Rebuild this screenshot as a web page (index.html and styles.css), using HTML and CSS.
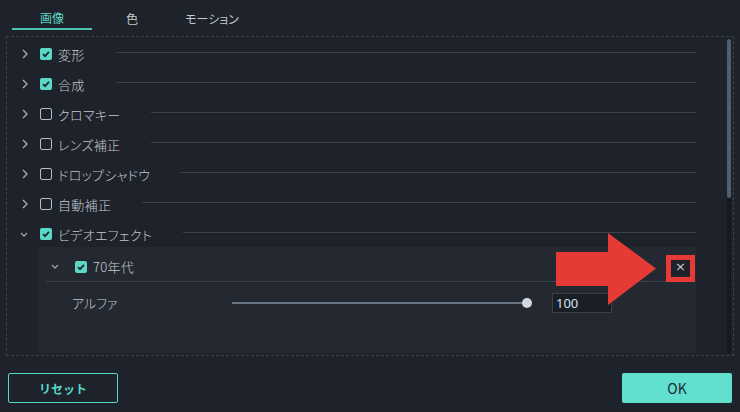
FILE: index.html
```html
<!DOCTYPE html>
<html lang="ja">

<head>
    <meta charset="UTF-8" />
    <meta name="viewport" content="width=device-width, initial-scale=1.0" />
    <title>エフェクト設定</title>
    <link rel="stylesheet" href="styles.css">
</head>

<body>
    <div class="tabs">
        <div class="tab active">画像</div>
        <div class="tab">色</div>
        <div class="tab">モーション</div>
    </div>

    <div class="content">
        <div class="list">
            <div class="row">
                <svg class="chev" width="6" height="10" viewBox="0 0 6 10"><path d="M1 1l4 4-4 4" /></svg>
                <span class="check on"><svg width="12" height="12" viewBox="0 0 12 12"><path d="M3 6.2l2 2 4-4.4" /></svg></span>
                <span class="name">変形</span>
                <span class="rule"></span>
            </div>
            <div class="row">
                <svg class="chev" width="6" height="10" viewBox="0 0 6 10"><path d="M1 1l4 4-4 4" /></svg>
                <span class="check on"><svg width="12" height="12" viewBox="0 0 12 12"><path d="M3 6.2l2 2 4-4.4" /></svg></span>
                <span class="name">合成</span>
                <span class="rule"></span>
            </div>
            <div class="row">
                <svg class="chev" width="6" height="10" viewBox="0 0 6 10"><path d="M1 1l4 4-4 4" /></svg>
                <span class="check"></span>
                <span class="name">クロマキー</span>
                <span class="rule"></span>
            </div>
            <div class="row">
                <svg class="chev" width="6" height="10" viewBox="0 0 6 10"><path d="M1 1l4 4-4 4" /></svg>
                <span class="check"></span>
                <span class="name">レンズ補正</span>
                <span class="rule"></span>
            </div>
            <div class="row">
                <svg class="chev" width="6" height="10" viewBox="0 0 6 10"><path d="M1 1l4 4-4 4" /></svg>
                <span class="check"></span>
                <span class="name">ドロップシャドウ</span>
                <span class="rule"></span>
            </div>
            <div class="row">
                <svg class="chev" width="6" height="10" viewBox="0 0 6 10"><path d="M1 1l4 4-4 4" /></svg>
                <span class="check"></span>
                <span class="name">自動補正</span>
                <span class="rule"></span>
            </div>
            <div class="row">
                <svg class="chev down" width="8" height="5" viewBox="0 0 8 5"><path d="M1 1l3 3 3-3" /></svg>
                <span class="check on"><svg width="12" height="12" viewBox="0 0 12 12"><path d="M3 6.2l2 2 4-4.4" /></svg></span>
                <span class="name">ビデオエフェクト</span>
                <span class="rule"></span>
            </div>

            <div class="panel">
                <div class="effect">
                    <svg class="chev down" width="8" height="5" viewBox="0 0 8 5"><path d="M1 1l3 3 3-3" /></svg>
                    <span class="check on"><svg width="12" height="12" viewBox="0 0 12 12"><path d="M3 6.2l2 2 4-4.4" /></svg></span>
                    <span class="name">70年代</span>
                    <button class="close" type="button">×</button>
                </div>
                <div class="param">
                    <span class="label">アルファ</span>
                    <div class="slider"><span class="track"></span><span class="thumb"></span></div>
                    <input class="value" type="text" value="100" />
                </div>
            </div>
        </div>
        <div class="scroll"><span class="thumb-bar"></span></div>
    </div>

    <div class="footer">
        <button class="btn reset" type="button">リセット</button>
        <button class="btn ok" type="button">OK</button>
    </div>

    <!-- annotation drawn over the dialog -->
    <svg class="note" width="740" height="412" viewBox="0 0 740 412">
        <polygon points="556,252 608,252 608,233 656,268.5 608,305 608,286 556,286" fill="#e53a35" />
        <rect x="668.5" y="257.5" width="24" height="22" fill="none" stroke="#e53a35" stroke-width="5" />
    </svg>
</body>

</html>
```

FILE: styles.css
```css
body {
    margin: 0;
    width: 740px;
    height: 412px;
    background: #1e222a;
    color: #c3c8ce;
    font-family: "Noto Sans CJK JP", "Noto Sans", sans-serif;
    font-feature-settings: "palt";
    position: relative;
    overflow: hidden;
}

.tabs {
    display: flex;
    height: 36px;
    padding-left: 12px;
}

.tab {
    width: 80px;
    height: 30px;
    box-sizing: border-box;
    display: flex;
    align-items: center;
    justify-content: center;
    padding-top: 7px;
    font-size: 12px;
}

.tab.active {
    color: #5dd6c6;
    border-bottom: 2px solid #4fc3b3;
}

.content {
    display: flex;
    height: 320px;
    margin: 0 6px;
    box-sizing: border-box;
    border: 1px dashed #3a434d;
}

.list {
    flex: 1;
    padding: 2px 0 0 15px;
    overflow: hidden;
}

.row {
    display: flex;
    align-items: center;
    height: 30px;
    padding-right: 31px;
    font-size: 13px;
    font-weight: 300;
}

.chev {
    flex: none;
    margin-right: 12px;
    fill: none;
    stroke: #a9afb7;
    stroke-width: 1.3;
}

.chev.down {
    margin-left: -2px;
    stroke: #9aa0a8;
}

.check {
    width: 12px;
    height: 12px;
    box-sizing: border-box;
    flex: none;
    border: 1.5px solid #b9bec5;
    border-radius: 2px;
    margin-right: 6px;
}

.check.on {
    background: #5bd8c8;
    border: none;
}

.check svg {
    display: block;
    fill: none;
    stroke: #1d2a30;
    stroke-width: 1.8;
}

.name {
    white-space: nowrap;
    letter-spacing: 0.3px;
}

.rule {
    flex: 1;
    height: 1px;
    margin: 0 0 3px 31px;
    background: #3b4149;
}

.panel {
    width: 658px;
    height: 106px;
    margin: -2px 0 0 16px;
    background: #242931;
}

.effect {
    display: flex;
    align-items: center;
    height: 35px;
    margin: 0 8px;
    padding: 5px 0 0 5px;
    box-sizing: border-box;
    border-bottom: 1px solid #3b4149;
    font-size: 13px;
    font-weight: 300;
}

.effect .chev {
    margin: 0 16px 0 0;
}

.effect .name {
    flex: 1;
}

.close {
    width: 19px;
    height: 18px;
    margin-right: -2px;
    padding: 0;
    border: none;
    background: #1e2229;
    color: #c9cdd3;
    font-size: 13px;
    line-height: 18px;
    font-family: "DejaVu Sans", sans-serif;
}

.param {
    display: flex;
    align-items: center;
    height: 38px;
    padding: 3px 0 0 34px;
    box-sizing: border-box;
    font-size: 13px;
    font-weight: 300;
}

.label {
    width: 160px;
    flex: none;
}

.slider {
    position: relative;
    width: 300px;
    height: 10px;
    display: flex;
    align-items: center;
}

.track {
    width: 295px;
    height: 2px;
    background: #687585;
}

.thumb {
    position: absolute;
    right: 0;
    top: 0;
    width: 10px;
    height: 10px;
    border-radius: 50%;
    background: #d3d8de;
}

.value {
    width: 60px;
    height: 20px;
    box-sizing: border-box;
    margin-left: 20px;
    padding: 0 3px;
    border: 1px solid #3a414b;
    background: #1a1e25;
    color: #d2e2f6;
    font-family: "Noto Sans", sans-serif;
    font-size: 13px;
    outline: none;
}

.scroll {
    width: 4px;
    margin: 2px 2px 2px 0;
    background: #161a1f;
    border-radius: 2px;
}

.thumb-bar {
    display: block;
    height: 159px;
    border-radius: 2px;
    background: #4f5e71;
}

.footer {
    display: flex;
    justify-content: space-between;
    padding: 17px 8px 0;
}

.btn {
    width: 110px;
    height: 30px;
    border-radius: 2px;
    font-family: "Noto Sans CJK JP", "Noto Sans", sans-serif;
    cursor: pointer;
}

.reset {
    background: none;
    border: 1px solid #5ad6c6;
    color: #5ad6c6;
    font-size: 12px;
    font-weight: bold;
}

.ok {
    background: #61e0cf;
    border: none;
    color: #1d2a33;
    font-size: 14px;
}

.note {
    position: absolute;
    left: 0;
    top: 0;
    pointer-events: none;
}
```
